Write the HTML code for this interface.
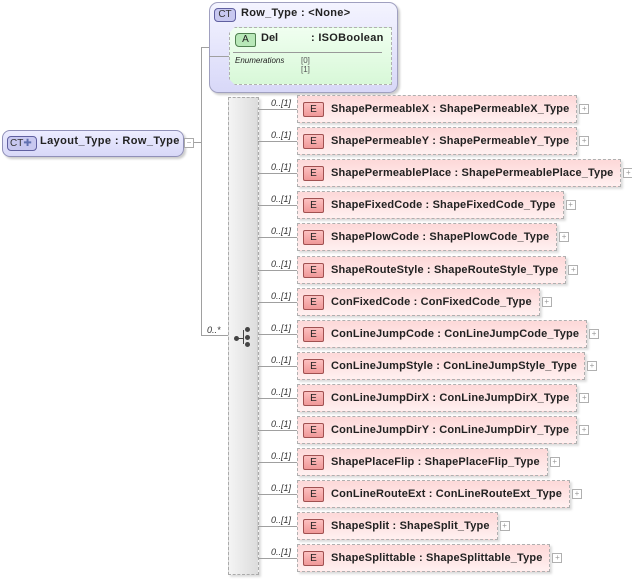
<!DOCTYPE html>
<html><head><meta charset="utf-8"><style>
body{margin:0;width:632px;height:579px;background:#fff;position:relative;overflow:hidden;font-family:"Liberation Sans",sans-serif;}
.a{position:absolute}
.ln{position:absolute;background:#a0a0a0}
.el{position:absolute;left:297px;height:26px;border:1px dashed #b0b0b0;background:linear-gradient(#fdd8d8,#fff0f0);box-shadow:2px 2px 2px #ddd;font-weight:bold;font-size:11px;letter-spacing:0.15px;color:#222;line-height:26px;padding:0 7px 0 33px;white-space:nowrap}
.el .e{position:absolute;left:5px;top:6px;width:19px;height:13px;border:1px solid #a05050;border-radius:2px;background:linear-gradient(#fcc0c0,#f09898);font-size:10px;font-weight:normal;line-height:13px;text-align:center;color:#222;letter-spacing:0}
.el .p{position:absolute;right:-13px;top:8px;width:8px;height:8px;border:1px solid #b0b0b0;background:#fff;font-size:8px;line-height:8px;text-align:center;color:#999;font-weight:normal}
.oc{position:absolute;left:258px;font-size:9px;font-style:italic;color:#333}
</style></head><body>
<div class="ln" style="left:194px;top:142px;width:8px;height:1px"></div>
<div class="ln" style="left:201px;top:47px;width:1px;height:289px"></div>
<div class="ln" style="left:201px;top:47px;width:8px;height:1px"></div>
<div class="ln" style="left:201px;top:335px;width:27px;height:1px"></div>
<div class="a" style="left:207px;top:325px;font-size:9px;font-style:italic;color:#333">0..*</div>
<div class="a" style="left:2px;top:130px;width:180px;height:25px;border:1px solid #9090b8;border-radius:8px;background:linear-gradient(#ececff,#d8d8f8);box-shadow:2px 2px 2px #ccc"></div>
<div class="a" style="left:7px;top:136px;width:26px;height:13px;border:1px solid #6060a0;border-radius:4px;background:#c8c8f0;font-size:10px;line-height:13px;color:#333;padding-left:2px">CT<span style="color:#6070b0">✚</span></div>
<div class="a" style="left:40px;top:135px;font-size:11px;font-weight:bold;color:#222;letter-spacing:0.4px">Layout_Type : Row_Type</div>
<div class="a" style="left:184px;top:138px;width:8px;height:8px;border:1px solid #aaa;background:#fff;font-size:8px;line-height:7px;text-align:center;color:#999">−</div>
<div class="a" style="left:209px;top:2px;width:187px;height:89px;border:1px solid #a0a0c0;border-radius:9px;background:linear-gradient(#f4f4ff,#d8d8f8);box-shadow:2px 2px 2px #ccc"></div>
<div class="a" style="left:214px;top:8px;width:20px;height:12px;border:1px solid #6060a0;border-radius:4px;background:#c8c8f0;font-size:10px;line-height:12px;text-align:center;color:#333">CT</div>
<div class="a" style="left:241px;top:7px;font-size:11px;font-weight:bold;color:#222;letter-spacing:0.3px">Row_Type : &lt;None&gt;</div>
<div class="a" style="left:229px;top:27px;width:161px;height:56px;border:1px dashed #b0b0b0;background:linear-gradient(#f0fff0,#d8f8d8);clip-path:polygon(6px 0,100% 0,100% 100%,6px 100%,0 calc(100% - 6px),0 6px)"></div>
<div class="ln" style="left:209px;top:56px;width:20px;height:1px"></div>
<div class="a" style="left:235px;top:33px;width:19px;height:12px;border:1px solid #508050;border-radius:4px 2px 2px 4px;background:#b8e8b8;font-size:10px;line-height:12px;text-align:center;color:#222">A</div>
<div class="a" style="left:261px;top:32px;font-size:11px;font-weight:bold;color:#222">Del</div>
<div class="a" style="left:311px;top:32px;font-size:11px;font-weight:bold;color:#222;letter-spacing:0.3px">: ISOBoolean</div>
<div class="ln" style="left:233px;top:52px;width:149px;height:1px;background:#999"></div>
<div class="a" style="left:235px;top:56px;font-size:8px;font-style:italic;color:#222">Enumerations</div>
<div class="a" style="left:301px;top:56px;font-size:8px;color:#555;line-height:9px">[0]<br>[1]</div>
<div class="a" style="left:228px;top:97px;width:29px;height:476px;border:1px dashed #aaa;background:linear-gradient(90deg,#f4f4f4,#dcdcdc);box-shadow:2px 2px 2px #ddd"></div>
<div class="ln" style="left:257px;top:108px;width:1px;height:450px;background:#ccc"></div>
<div class="a" style="left:234px;top:336px;width:5px;height:5px;border-radius:50%;background:#444"></div>
<div class="ln" style="left:238px;top:338px;width:6px;height:1px;background:#444"></div>
<div class="ln" style="left:243px;top:330px;width:1px;height:14px;background:#444"></div>
<div class="a" style="left:245px;top:327px;width:5px;height:5px;border-radius:50%;background:#444"></div>
<div class="a" style="left:245px;top:335px;width:5px;height:5px;border-radius:50%;background:#444"></div>
<div class="a" style="left:245px;top:342px;width:5px;height:5px;border-radius:50%;background:#444"></div>
<div class="ln" style="left:258px;top:109px;width:39px;height:1px"></div><div class="oc" style="top:98px;left:271px">0..[1]</div>
<div class="el" style="top:95px"><span class="e">E</span>ShapePermeableX : ShapePermeableX_Type<span class="p">+</span></div>
<div class="ln" style="left:258px;top:141px;width:39px;height:1px"></div><div class="oc" style="top:130px;left:271px">0..[1]</div>
<div class="el" style="top:127px"><span class="e">E</span>ShapePermeableY : ShapePermeableY_Type<span class="p">+</span></div>
<div class="ln" style="left:258px;top:173px;width:39px;height:1px"></div><div class="oc" style="top:162px;left:271px">0..[1]</div>
<div class="el" style="top:159px"><span class="e">E</span>ShapePermeablePlace : ShapePermeablePlace_Type<span class="p">+</span></div>
<div class="ln" style="left:258px;top:205px;width:39px;height:1px"></div><div class="oc" style="top:194px;left:271px">0..[1]</div>
<div class="el" style="top:191px"><span class="e">E</span>ShapeFixedCode : ShapeFixedCode_Type<span class="p">+</span></div>
<div class="ln" style="left:258px;top:237px;width:39px;height:1px"></div><div class="oc" style="top:226px;left:271px">0..[1]</div>
<div class="el" style="top:223px"><span class="e">E</span>ShapePlowCode : ShapePlowCode_Type<span class="p">+</span></div>
<div class="ln" style="left:258px;top:270px;width:39px;height:1px"></div><div class="oc" style="top:259px;left:271px">0..[1]</div>
<div class="el" style="top:256px"><span class="e">E</span>ShapeRouteStyle : ShapeRouteStyle_Type<span class="p">+</span></div>
<div class="ln" style="left:258px;top:302px;width:39px;height:1px"></div><div class="oc" style="top:291px;left:271px">0..[1]</div>
<div class="el" style="top:288px"><span class="e">E</span>ConFixedCode : ConFixedCode_Type<span class="p">+</span></div>
<div class="ln" style="left:258px;top:334px;width:39px;height:1px"></div><div class="oc" style="top:323px;left:271px">0..[1]</div>
<div class="el" style="top:320px"><span class="e">E</span>ConLineJumpCode : ConLineJumpCode_Type<span class="p">+</span></div>
<div class="ln" style="left:258px;top:366px;width:39px;height:1px"></div><div class="oc" style="top:355px;left:271px">0..[1]</div>
<div class="el" style="top:352px"><span class="e">E</span>ConLineJumpStyle : ConLineJumpStyle_Type<span class="p">+</span></div>
<div class="ln" style="left:258px;top:398px;width:39px;height:1px"></div><div class="oc" style="top:387px;left:271px">0..[1]</div>
<div class="el" style="top:384px"><span class="e">E</span>ConLineJumpDirX : ConLineJumpDirX_Type<span class="p">+</span></div>
<div class="ln" style="left:258px;top:430px;width:39px;height:1px"></div><div class="oc" style="top:419px;left:271px">0..[1]</div>
<div class="el" style="top:416px"><span class="e">E</span>ConLineJumpDirY : ConLineJumpDirY_Type<span class="p">+</span></div>
<div class="ln" style="left:258px;top:462px;width:39px;height:1px"></div><div class="oc" style="top:451px;left:271px">0..[1]</div>
<div class="el" style="top:448px"><span class="e">E</span>ShapePlaceFlip : ShapePlaceFlip_Type<span class="p">+</span></div>
<div class="ln" style="left:258px;top:494px;width:39px;height:1px"></div><div class="oc" style="top:483px;left:271px">0..[1]</div>
<div class="el" style="top:480px"><span class="e">E</span>ConLineRouteExt : ConLineRouteExt_Type<span class="p">+</span></div>
<div class="ln" style="left:258px;top:526px;width:39px;height:1px"></div><div class="oc" style="top:515px;left:271px">0..[1]</div>
<div class="el" style="top:512px"><span class="e">E</span>ShapeSplit : ShapeSplit_Type<span class="p">+</span></div>
<div class="ln" style="left:258px;top:558px;width:39px;height:1px"></div><div class="oc" style="top:547px;left:271px">0..[1]</div>
<div class="el" style="top:544px"><span class="e">E</span>ShapeSplittable : ShapeSplittable_Type<span class="p">+</span></div>
</body></html>
